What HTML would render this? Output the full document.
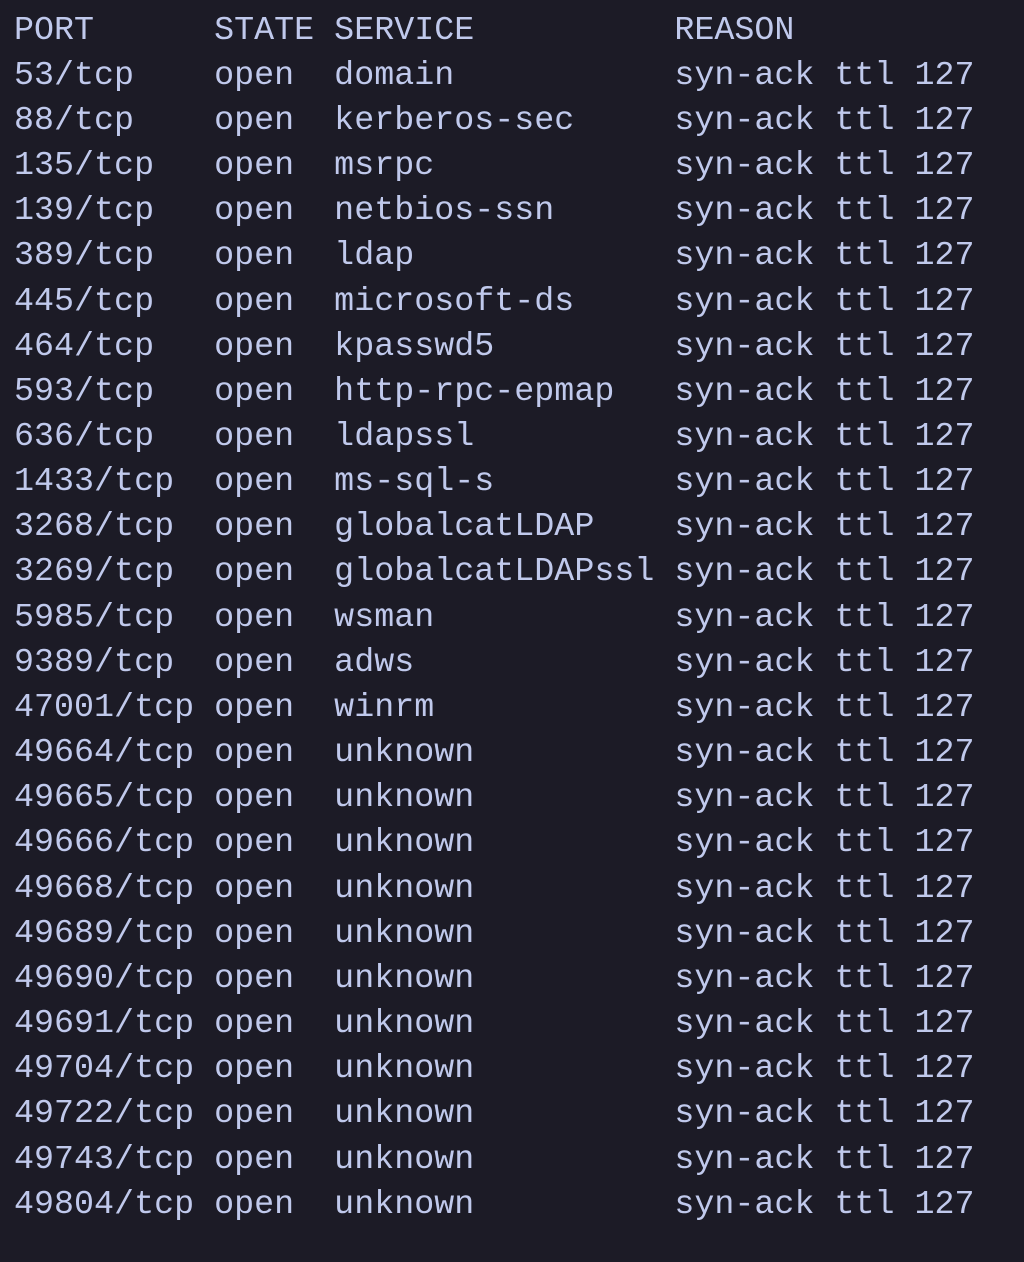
<!DOCTYPE html>
<html><head><meta charset="utf-8"><style>
html,body{margin:0;padding:0;background:#1c1b26;width:1024px;height:1262px;overflow:hidden}
pre{margin:0;position:absolute;left:14px;top:7.6px;font-family:"Liberation Mono",monospace;font-size:33.3px;line-height:45.15px;color:#c0c9ec;letter-spacing:0.03px}
</style></head><body><pre>PORT      STATE SERVICE          REASON
53/tcp    open  domain           syn-ack ttl 127
88/tcp    open  kerberos-sec     syn-ack ttl 127
135/tcp   open  msrpc            syn-ack ttl 127
139/tcp   open  netbios-ssn      syn-ack ttl 127
389/tcp   open  ldap             syn-ack ttl 127
445/tcp   open  microsoft-ds     syn-ack ttl 127
464/tcp   open  kpasswd5         syn-ack ttl 127
593/tcp   open  http-rpc-epmap   syn-ack ttl 127
636/tcp   open  ldapssl          syn-ack ttl 127
1433/tcp  open  ms-sql-s         syn-ack ttl 127
3268/tcp  open  globalcatLDAP    syn-ack ttl 127
3269/tcp  open  globalcatLDAPssl syn-ack ttl 127
5985/tcp  open  wsman            syn-ack ttl 127
9389/tcp  open  adws             syn-ack ttl 127
47001/tcp open  winrm            syn-ack ttl 127
49664/tcp open  unknown          syn-ack ttl 127
49665/tcp open  unknown          syn-ack ttl 127
49666/tcp open  unknown          syn-ack ttl 127
49668/tcp open  unknown          syn-ack ttl 127
49689/tcp open  unknown          syn-ack ttl 127
49690/tcp open  unknown          syn-ack ttl 127
49691/tcp open  unknown          syn-ack ttl 127
49704/tcp open  unknown          syn-ack ttl 127
49722/tcp open  unknown          syn-ack ttl 127
49743/tcp open  unknown          syn-ack ttl 127
49804/tcp open  unknown          syn-ack ttl 127</pre></body></html>
